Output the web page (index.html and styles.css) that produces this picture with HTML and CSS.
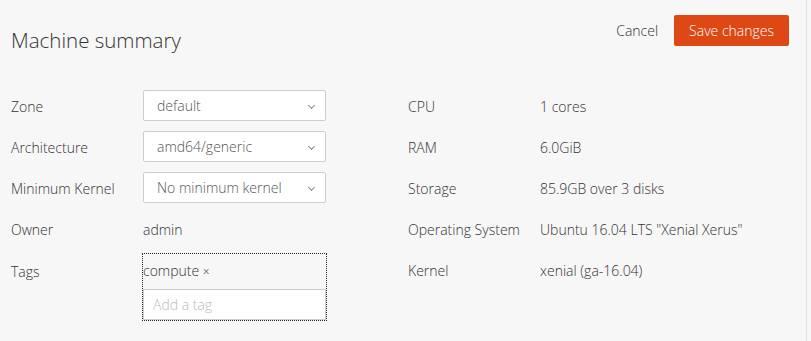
FILE: index.html
```html
<!DOCTYPE html>
<html lang="en">
<head>
    <meta charset="UTF-8">
    <meta name="viewport" content="width=device-width, initial-scale=1.0">
    <title>Machine summary</title>
    <link rel="stylesheet" href="styles.css">
</head>
<body>

<div class="panel">
    <div class="panel-header">
        <h2 class="panel-title">Machine summary</h2>
        <div class="actions">
            <a class="link-button" href="#">Cancel</a>
            <button class="button-primary">Save changes</button>
        </div>
    </div>

    <div class="summary">
        <div class="column">
            <div class="row">
                <span class="label">Zone</span>
                <div class="select">default<span class="chevron"></span></div>
            </div>
            <div class="row">
                <span class="label">Architecture</span>
                <div class="select">amd64/generic<span class="chevron"></span></div>
            </div>
            <div class="row">
                <span class="label">Minimum Kernel</span>
                <div class="select">No minimum kernel<span class="chevron"></span></div>
            </div>
            <div class="row">
                <span class="label">Owner</span>
                <span class="value">admin</span>
            </div>
            <div class="row row-tags">
                <span class="label">Tags</span>
                <div class="tags">
                    <div class="tag-list"><span class="tag">compute <span class="tag-remove">×</span></span></div>
                    <input class="tag-input" type="text" placeholder="Add a tag">
                </div>
            </div>
        </div>

        <div class="column column-right">
            <div class="row">
                <span class="label">CPU</span>
                <span class="value">1 cores</span>
            </div>
            <div class="row">
                <span class="label">RAM</span>
                <span class="value">6.0GiB</span>
            </div>
            <div class="row">
                <span class="label">Storage</span>
                <span class="value">85.9GB over 3 disks</span>
            </div>
            <div class="row">
                <span class="label">Operating System</span>
                <span class="value">Ubuntu 16.04 LTS "Xenial Xerus"</span>
            </div>
            <div class="row">
                <span class="label">Kernel</span>
                <span class="value">xenial (ga-16.04)</span>
            </div>
        </div>
    </div>
</div>

</body>
</html>
```

FILE: styles.css
```css
body {
    margin: 0;
    padding: 0;
    background-color: #f7f7f7;
    font-family: "Open Sans", "Noto Sans", sans-serif;
    font-weight: 300;
    font-size: 14px;
    color: #333;
}
.panel {
    width: 807px;
    height: 341px;
    box-sizing: border-box;
    border-right: 1px solid #e2e2e2;
}
.panel-header {
    display: flex;
    justify-content: space-between;
    align-items: flex-start;
    padding: 15px 17px 0 11px;
    height: 75px;
    box-sizing: border-box;
}
.panel-title {
    margin: 9px 0 0;
    font-size: 20.5px;
    font-weight: 300;
    line-height: 32px;
}
.actions {
    display: flex;
    align-items: center;
    gap: 16px;
}
.link-button {
    color: #333;
    text-decoration: none;
}
.button-primary {
    font-family: inherit;
    font-weight: 300;
    font-size: 14px;
    height: 31px;
    padding: 0 15px;
    border: none;
    border-radius: 2px;
    background-color: #dd4814;
    color: #fff;
}
.summary {
    display: flex;
    padding: 15px 0 0 11px;
}
.column {
    width: 315px;
    display: flex;
    flex-direction: column;
    gap: 10px;
}
.column-right {
    margin-left: 82px;
    width: 390px;
}
.row {
    display: grid;
    grid-template-columns: 132px 1fr;
    align-items: center;
    min-height: 31px;
}
.label,
.value {
    padding-top: 1px;
}
.row-tags {
    align-items: start;
}
.row-tags .label {
    line-height: 33px;
}
.select {
    position: relative;
    width: 183px;
    height: 31px;
    box-sizing: border-box;
    border: 1px solid #cdcdcd;
    border-radius: 2px;
    background-color: #fff;
    padding-left: 13px;
    line-height: 30px;
    color: #555;
}
.chevron {
    position: absolute;
    right: 11px;
    top: 12px;
    width: 4px;
    height: 4px;
    border-right: 1px solid #888;
    border-bottom: 1px solid #888;
    transform: rotate(45deg);
}
.tags {
    width: 183px;
    outline: 1px dotted #222;
}
.tag-list {
    line-height: 34px;
}
.tag-remove {
    font-size: 12px;
}
.tag-input {
    display: block;
    width: 100%;
    height: 31px;
    box-sizing: border-box;
    margin: 0;
    border: 1px solid #cdcdcd;
    background-color: #fff;
    padding: 0 9px;
    font-family: inherit;
    font-weight: 300;
    font-size: 14px;
    color: #333;
}
.tag-input::placeholder {
    color: #bbb;
}
```
